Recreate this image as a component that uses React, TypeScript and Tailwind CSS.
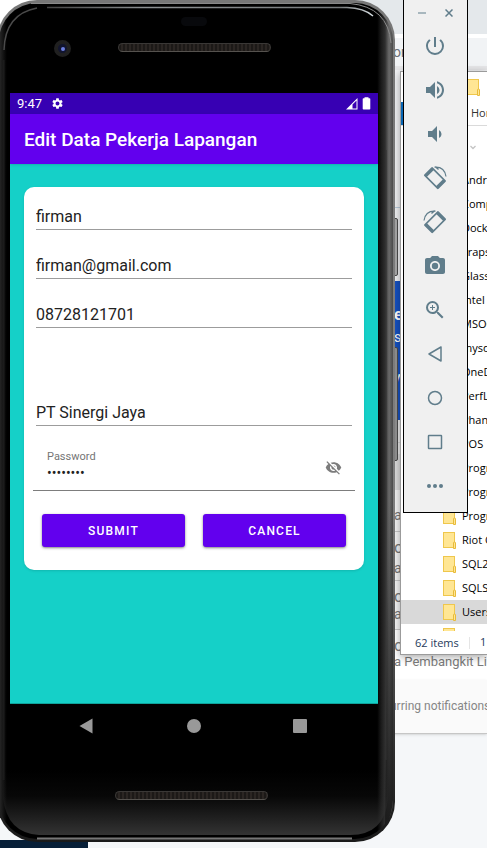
import React, { useState } from 'react';
import {
  MdCameraAlt,
  MdPowerSettingsNew,
  MdSettings,
  MdVisibilityOff,
  MdVolumeDown,
  MdVolumeUp,
  MdZoomIn,
} from 'react-icons/md';

const roboto = "font-['Roboto','Liberation_Sans',sans-serif]";
const segoe = "font-['Open_Sans','Noto_Sans',sans-serif]";

/* ---------- Browser page at the back of the desktop ---------- */

function BrowserPage() {
  return (
    <div className={`absolute inset-0 flex flex-col bg-[#f5f7f9] ${roboto}`}>
      <div className="h-[34px] shrink-0 bg-[#e4e8eb]" />
      <div className="h-1 shrink-0 bg-white" />
      <div className="flex h-7 shrink-0 items-center bg-[#f1f3f5] pl-[393px] text-sm text-[#6b7078]">or</div>
      <div className="h-1 shrink-0 bg-[#e6e6e8]" />
      <div className="h-[138px] shrink-0 border-b border-[#b9cbdc] bg-[#f0f1f3]" />
      <div className="h-[73px] shrink-0 bg-[#f0f1f3]" />
      <div className="h-[139px] shrink-0 bg-[#1550c0] pt-6 pl-[394px] font-bold text-white">
        <p className="h-6 text-base leading-5">e</p>
        <p className="h-10 text-sm font-normal leading-4">s</p>
        <p className="text-sm font-normal leading-4">w</p>
      </div>
      <div className="h-[23px] shrink-0 border-b border-[#d4d4d4] bg-[#ececec]" />
      <div className="h-[11px] shrink-0 bg-[#eaeaea]" />
      <div className="h-9 shrink-0 bg-[#dcdcdc]" />
      <div className="shrink-0 bg-[#f4f4f4] pl-[394px] text-sm text-[#777777]">
        <p className="h-[42px] border-b border-[#c8c8c8] pt-[17px] leading-4">a</p>
        <p className="h-[26px] pt-2 text-base leading-4">o</p>
        <p className="h-[23px] border-b border-[#c8c8c8] leading-5">a</p>
        <p className="h-[23px] pt-2 text-base leading-4">o</p>
        <p className="h-[26px] border-b border-[#c8c8c8] leading-5">a</p>
      </div>
      <div className="shrink-0 whitespace-nowrap bg-white pl-[394px] text-[13px] text-[#7b7b7b]">
        <p className="h-6 pt-2 text-base leading-4">o</p>
        <p className="h-[26px] leading-4">a Pembangkit Listrik</p>
      </div>
      <div className="h-[54px] shrink-0 whitespace-nowrap border-b border-[#c6c6c6] bg-[#fafafa] pl-[390px] text-xs leading-[52px] text-[#868686] shadow-sm">
        urring notifications
      </div>
      <div className="grow" />
      <div className="h-2 w-[88px] shrink-0 bg-[#071f38]" />
    </div>
  );
}

/* ---------- File explorer window ---------- */

const folders = [
  'Android', 'Compiler', 'Docker', 'Fraps', 'Glassfish', 'Intel', 'MSOCache', 'mysql', 'OneDrive', 'PerfLogs',
  'Phantom', 'POS', 'Program Files', 'Program Files (x86)', 'ProgramData', 'Riot Games', 'SQL2019', 'SQLServer',
  'Users',
];

function FolderIcon() {
  return (
    <svg width="13" height="17" viewBox="0 0 13 17" className="shrink-0" aria-hidden="true">
      <rect x=".5" y=".5" width="11" height="15" fill="#ffe694" stroke="#efc74c" />
      <path d="M10.5 16.5V11q0-1 1-1t1 1v5.500z" fill="#ffe694" stroke="#e8bb3a" />
    </svg>
  );
}

function Explorer() {
  return (
    <section
      className={`absolute top-[71px] right-0 left-[400px] overflow-hidden border border-r-0 border-[#9b9b9b] bg-white text-[11px] text-black shadow-[0_2px_8px_rgba(0,0,0,0.35)] ${segoe}`}
    >
      <div className="flex h-[30px] items-center pl-[66px]">
        <FolderIcon />
      </div>
      <div className="flex h-6 items-center border-b border-[#dadada]">
        <div className="h-full w-[66px] shrink-0 bg-[#0a67b5]" />
        <span className="pl-1 text-[#333333]">Home</span>
      </div>
      <div className="flex h-[42px] items-center pl-[68px]">
        <svg width="8" height="5" viewBox="0 0 8 5" fill="none" stroke="#c4c4c4" strokeWidth="1.300" aria-hidden="true">
          <path d="M1.500 1 4 3.500 6.500 1" />
        </svg>
      </div>
      <ul className="h-[463px] overflow-hidden">
        {folders.map((name) => (
          <li
            key={name}
            className={`flex h-6 items-center gap-[6px] whitespace-nowrap pl-[42px] ${name === 'Users' ? 'bg-[#d9d9d9]' : ''}`}
          >
            <FolderIcon />
            {name}
          </li>
        ))}
        <li className="flex h-6 items-center pl-[42px]">
          <FolderIcon />
        </li>
      </ul>
      <div className="flex h-[23px] items-center whitespace-nowrap pl-[14px] text-[#1e395b]">
        <span className="w-[55px] shrink-0 border-r border-[#e5e5e5] leading-3">62 items</span>
        <span className="pl-[10px]">1 item selected</span>
      </div>
    </section>
  );
}

/* ---------- Phone ---------- */

function Speaker({ className }: { className: string }) {
  return (
    <div
      className={`h-[9px] w-[153px] rounded-full border border-[#3a3836] border-b-[#55524e] bg-[repeating-linear-gradient(90deg,#1c1917_0px,#1c1917_2px,#2b2623_2px,#2b2623_4px)] ${className}`}
    />
  );
}

function Field({ label, value, type = 'text' }: { label: string; value: string; type?: string }) {
  return (
    <input
      aria-label={label}
      type={type}
      defaultValue={value}
      className="h-[27px] w-full border-b border-[#9c9c9c] bg-transparent text-base text-[#222222] outline-none"
    />
  );
}

function AppScreen() {
  const [hidden, setHidden] = useState(true);
  return (
    <main className="flex h-[611px] flex-col border-b border-[#0fa39b] bg-[#15d0c8]">
      <div className="flex h-[21px] shrink-0 items-center bg-[#3700b3] pr-[6px] pl-[7px] text-white">
        <span className="w-[34px] text-[13px]">9:47</span>
        <MdSettings size={13} />
        <svg className="ml-auto" width="26" height="14" viewBox="0 0 26 14" fill="#fff" aria-hidden="true">
          <path d="M0 12.500 11.500 1v11.500zM6.500 11.500h4V3.500l-4 4z" fillRule="evenodd" />
          <path d="M18.500 1.300V.3h4v1h1q.8 0 .8.800v9.600q0 .8-.8.800h-6q-.8 0-.8-.8V2.100q0-.8.8-.8z" />
        </svg>
      </div>
      <header className="flex h-[50px] shrink-0 items-center bg-[#6200ee] px-[14px] pt-[2px] shadow-sm">
        <h1 className="text-[19px] font-medium text-white">Edit Data Pekerja Lapangan</h1>
      </header>
      <form
        className="mx-[14px] mt-[23px] rounded-[10px] bg-white pt-4 pb-[23px] shadow-sm"
        onSubmit={(e) => e.preventDefault()}
      >
        <div className="flex flex-col gap-[22px] px-3">
          <Field label="Nama" value="firman" />
          <Field label="Email" type="email" value="firman@gmail.com" />
          <Field label="Telepon" type="tel" value="08728121701" />
          <div className="h-[27px]" />
          <Field label="Perusahaan" value="PT Sinergi Jaya" />
        </div>
        <div className="mx-[9px] mt-[22px] flex h-[43px] items-center border-b border-[#7d7d7d] pr-[13px] pl-[14px]">
          <div className="flex grow flex-col pb-2">
            <label htmlFor="password" className="text-[11px] leading-4 text-[#757575]">
              Password
            </label>
            <input
              id="password"
              type={hidden ? 'password' : 'text'}
              defaultValue="firman12"
              className="h-4 w-full bg-transparent text-sm text-[#222222] outline-none"
            />
          </div>
          <button
            type="button"
            aria-label="Show password"
            className="pb-1 text-[#7c7c7c]"
            onClick={() => setHidden(!hidden)}
          >
            <MdVisibilityOff size={17} />
          </button>
        </div>
        <div className="mt-[23px] flex gap-[18px] px-[18px] text-xs font-medium tracking-widest text-white">
          <button type="submit" className="h-[33px] flex-1 rounded-[3px] bg-[#6200ee] shadow-sm shadow-black/40">
            SUBMIT
          </button>
          <button type="button" className="h-[33px] flex-1 rounded-[3px] bg-[#6200ee] shadow-sm shadow-black/40">
            CANCEL
          </button>
        </div>
      </form>
    </main>
  );
}

function PhoneNav() {
  return (
    <nav className="flex h-[43px] items-center justify-between px-[68px] text-[#999999]">
      <button type="button" aria-label="Back">
        <svg width="16" height="16" viewBox="0 0 16 16" fill="currentColor" aria-hidden="true">
          <path d="M1.500 8 14.500.5v15z" />
        </svg>
      </button>
      <button type="button" aria-label="Home" className="size-[14px] rounded-full bg-[#999999]" />
      <button type="button" aria-label="Recent apps" className="mr-[3px] size-[14px] rounded-[1px] bg-[#999999]" />
    </nav>
  );
}

function Phone() {
  return (
    <div className={`absolute top-0 -left-[3px] w-[398px] ${roboto}`}>
      <div className="absolute top-[218px] -right-[3px] h-[58px] w-2 rounded-[2px] border border-[#444444] bg-[#a0a0a0]" />
      <div className="absolute top-[347px] -right-[3px] h-[114px] w-2 rounded-[2px] border border-[#444444] bg-[#8a8a8a]" />
      <div className="relative overflow-hidden rounded-[40px] bg-[linear-gradient(180deg,#777777_0%,#7d7d7d_60%,#2c2c2c_90%,#1a1a1a_100%)] pt-[3px] pr-[2px] pb-[3px] pl-[2px]">
        <div className="rounded-[38px] bg-[linear-gradient(90deg,#2a2a2a_0%,#000000_2%,#000000_96%,#1b1b1b_97%,#2f2f2f_98%,#6b6b6b_99%,#4a4a4a_100%)] pr-[15px] pl-[11px]">
          <svg className="absolute inset-0 h-full w-full" viewBox="0 0 398 842" preserveAspectRatio="none" fill="none" aria-hidden="true">
            <defs>
              <linearGradient id="chin" x1="0" y1="0" x2="0" y2="1">
                <stop offset="0" stopColor="#303030" stopOpacity="0" />
                <stop offset=".4" stopColor="#303030" stopOpacity=".15" />
                <stop offset="1" stopColor="#343434" />
              </linearGradient>
              <linearGradient id="side" x1="0" y1="0" x2="0" y2="1">
                <stop offset="0" stopColor="#1c1c1c" stopOpacity="0" />
                <stop offset="1" stopColor="#1c1c1c" />
              </linearGradient>
              <linearGradient id="shine" x1="0" y1="0" x2="1" y2="0">
                <stop offset="0" stopColor="#444" />
                <stop offset=".3" stopColor="#8d9193" />
                <stop offset=".9" stopColor="#777b7d" />
                <stop offset="1" stopColor="#d5dcdf" />
              </linearGradient>
            </defs>
            <path d="M391 500H396V800Q394 820 388 825Z" fill="url(#side)" />
            <path d="M6 770H391V798Q388 835 353 835H42Q10 833 6 798Z" fill="url(#chin)" />
            <path d="M34 3.500H353Q391 7 394 43" stroke="#8a8a8a" />
            <path d="M50 7.500H350Q367 8 376 16" stroke="url(#shine)" strokeWidth="1.500" />
            <path d="M7 50Q8 14 40 8" stroke="#4a4a4a" strokeWidth="1.500" />
            <path d="M6.500 60V780" stroke="#1c1c1c" strokeWidth="2" />
            <path d="M40 838.500H355" stroke="#777" strokeWidth="2" />
            <path d="M389 150V760" stroke="#333" />
          </svg>
          <div className="relative h-[90px]">
            <div className="absolute top-[37px] left-11 flex size-[17px] items-center justify-center rounded-full border-4 border-[#202020] bg-[#11142e]">
              <div className="size-1 rounded-full bg-[#6c7fe0]" />
            </div>
            <div className="absolute top-[14px] left-[171px] h-[9px] w-[26px] rounded-full bg-[#08090c]" />
            <Speaker className="absolute top-10 left-[108px]" />
          </div>
          <div className="relative">
            <AppScreen />
            <PhoneNav />
            <div className="h-[92px] pt-11 pl-[105px]">
              <Speaker className="" />
            </div>
          </div>
        </div>
      </div>
    </div>
  );
}

/* ---------- Emulator tool bar ---------- */

function RotateIcon({ flipped = false }: { flipped?: boolean }) {
  return (
    <svg width="24" height="24" viewBox="0 0 24 24" className={flipped ? '-scale-x-100' : ''} aria-hidden="true">
      <path
        fill="currentColor"
        fillRule="evenodd"
        d="M8.300 1.500 1.300 8.500Q.5 9.300 1.300 10.100L14 22.800q.8.800 1.600 0l7-7q.8-.8 0-1.600L9.900 1.500q-.8-.8-1.600 0zM9.300 3.300 3.100 9.500l11.500 11.500 6.200-6.200z"
      />
      <path d="m1.500 9.300 7.600-7.500 2 2-7.600 7.500zM12.700 20.500l7.600-7.500 2 2-7.500 7.500z" fill="currentColor" />
      <path d="M11.500 1.200Q21.500.5 23 10.500M12.500 1l3 2.500" fill="none" stroke="currentColor" strokeWidth="1.200" />
    </svg>
  );
}

function Outline({ children }: { children: React.ReactNode }) {
  return (
    <svg width="24" height="24" viewBox="0 0 24 24" fill="none" stroke="currentColor" strokeWidth="1.500" strokeLinejoin="round" aria-hidden="true">
      {children}
    </svg>
  );
}

const tools = [
  { label: 'Power', icon: <MdPowerSettingsNew size={24} /> },
  { label: 'Volume up', icon: <MdVolumeUp size={24} /> },
  { label: 'Volume down', icon: <MdVolumeDown size={24} /> },
  { label: 'Rotate left', icon: <RotateIcon /> },
  { label: 'Rotate right', icon: <RotateIcon flipped /> },
  { label: 'Take screenshot', icon: <MdCameraAlt size={24} /> },
  { label: 'Zoom', icon: <MdZoomIn size={24} /> },
  { label: 'Back', icon: <Outline><path d="M6 12 18 5v14z" /></Outline> },
  { label: 'Home', icon: <Outline><circle cx="12" cy="12" r="6.500" /></Outline> },
  { label: 'Overview', icon: <Outline><rect x="5.500" y="5.500" width="13" height="13" rx=".5" /></Outline> },
  {
    label: 'More',
    icon: (
      <svg width="24" height="24" viewBox="0 0 24 24" fill="currentColor" aria-hidden="true">
        <circle cx="6" cy="12" r="2" />
        <circle cx="12" cy="12" r="2" />
        <circle cx="18" cy="12" r="2" />
      </svg>
    ),
  },
];

function EmulatorBar() {
  return (
    <aside className="absolute top-0 left-[403px] w-[65px] border border-t-0 border-black bg-[#f0f0f0] pb-1 text-[#607d8b]">
      <div className="flex h-6 items-center justify-center gap-[19px] pt-[2px]">
        <button type="button" aria-label="Minimize">
          <svg width="8" height="8" viewBox="0 0 8 8" stroke="#90a4ae" strokeWidth="1.500" aria-hidden="true">
            <path d="M0 4h8" />
          </svg>
        </button>
        <button type="button" aria-label="Close">
          <svg width="8" height="8" viewBox="0 0 8 8" stroke="currentColor" strokeWidth="1.500" aria-hidden="true">
            <path d="m.5.5 7 7m0-7-7 7" />
          </svg>
        </button>
      </div>
      {tools.map((tool) => (
        <button
          key={tool.label}
          type="button"
          aria-label={tool.label}
          className="flex h-11 w-full items-center justify-center pr-[1px]"
        >
          {tool.icon}
        </button>
      ))}
    </aside>
  );
}

export default function App() {
  return (
    <div className="relative h-screen min-h-[848px] w-full overflow-hidden">
      <BrowserPage />
      <div className="absolute top-0 left-0 size-10 bg-white" />
      <Explorer />
      <Phone />
      <EmulatorBar />
    </div>
  );
}
